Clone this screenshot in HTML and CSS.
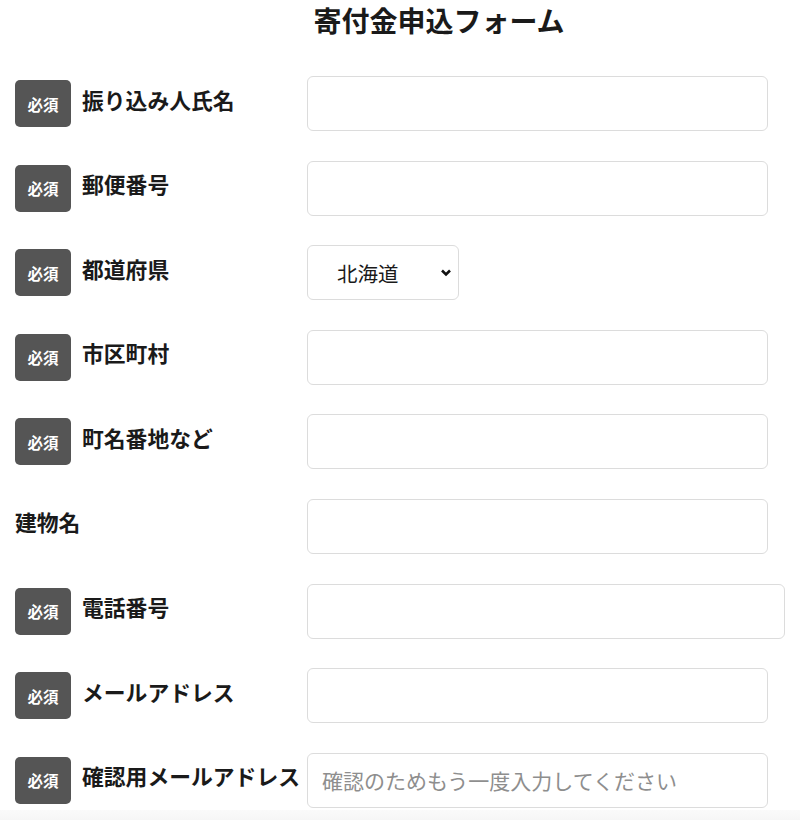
FILE: index.html
```html
<!DOCTYPE html>
<html lang="ja">
<head>
<meta charset="utf-8">
<title>寄付金申込フォーム</title>
<link rel="stylesheet" href="styles.css">
</head>
<body>
<h1 class="title">寄付金申込フォーム</h1>
<form class="form">
  <div class="row">
    <div class="label"><span class="badge">必須</span><span class="text">振り込み人氏名</span></div>
    <input class="field" type="text">
  </div>
  <div class="row">
    <div class="label"><span class="badge">必須</span><span class="text">郵便番号</span></div>
    <input class="field" type="text">
  </div>
  <div class="row">
    <div class="label"><span class="badge">必須</span><span class="text">都道府県</span></div>
    <div class="select-wrap">
      <select class="select"><option>北海道</option></select>
      <svg class="chev" width="12" height="9" viewBox="0 0 12 9"><path d="M2 2.5 L6 6.5 L10 2.5" fill="none" stroke="#111" stroke-width="2.6"/></svg>
    </div>
  </div>
  <div class="row">
    <div class="label"><span class="badge">必須</span><span class="text">市区町村</span></div>
    <input class="field" type="text">
  </div>
  <div class="row">
    <div class="label"><span class="badge">必須</span><span class="text">町名番地など</span></div>
    <input class="field" type="text">
  </div>
  <div class="row">
    <div class="label"><span class="text">建物名</span></div>
    <input class="field" type="text">
  </div>
  <div class="row">
    <div class="label"><span class="badge">必須</span><span class="text">電話番号</span></div>
    <input class="field field-wide" type="text">
  </div>
  <div class="row">
    <div class="label"><span class="badge">必須</span><span class="text">メールアドレス</span></div>
    <input class="field" type="text">
  </div>
  <div class="row">
    <div class="label"><span class="badge">必須</span><span class="text">確認用メールアドレス</span></div>
    <input class="field" type="text" placeholder="確認のためもう一度入力してください">
  </div>
</form>
<div class="fade"></div>
</body>
</html>
```
FILE: styles.css
```css
html, body {
  margin: 0;
  padding: 0;
  background: #fff;
}
body {
  font-family: "Noto Sans CJK JP", "Noto Sans", sans-serif;
  color: #1a1a1a;
  width: 800px;
  overflow: hidden;
}
.title {
  margin: 0;
  padding-left: 78px;
  font-size: 28px;
  line-height: 40px;
  font-weight: bold;
  text-align: center;
}
.form {
  margin-top: 36px;
  padding-left: 15px;
  display: flex;
  flex-direction: column;
  gap: 29.6px;
}
.row {
  display: flex;
  align-items: center;
  height: 55px;
}
.label {
  width: 292px;
  flex: none;
  display: flex;
  align-items: center;
  gap: 11px;
}
.badge {
  width: 56px;
  height: 47px;
  flex: none;
  background: #555;
  color: #fff;
  border-radius: 5px;
  font-size: 15.5px;
  font-weight: bold;
  display: flex;
  align-items: center;
  justify-content: center;
}
.text {
  font-size: 21.8px;
  font-weight: bold;
  line-height: 30px;
  padding-bottom: 8px;
  white-space: nowrap;
}
.field {
  box-sizing: border-box;
  width: 461px;
  height: 55px;
  border: 1px solid #dcdcdc;
  border-radius: 6px;
  padding: 0 14px;
  font-family: inherit;
  font-size: 21px;
  background: #fff;
  outline: none;
}
.field-wide {
  width: 478px;
}
.field::placeholder {
  color: #8e8e8e;
}
.select-wrap {
  position: relative;
  width: 152px;
  height: 55px;
}
.select {
  appearance: none;
  -webkit-appearance: none;
  box-sizing: border-box;
  width: 152px;
  height: 55px;
  border: 1px solid #dcdcdc;
  border-radius: 6px;
  background: #fff;
  padding: 0 0 0 29px;
  font-family: inherit;
  font-size: 20.5px;
  color: #1a1a1a;
  outline: none;
}
.chev {
  position: absolute;
  right: 7px;
  top: 23px;
  pointer-events: none;
}
.fade {
  margin-top: 2px;
  height: 20px;
  background: linear-gradient(#fafafa, #f2f2f2);
}
```
